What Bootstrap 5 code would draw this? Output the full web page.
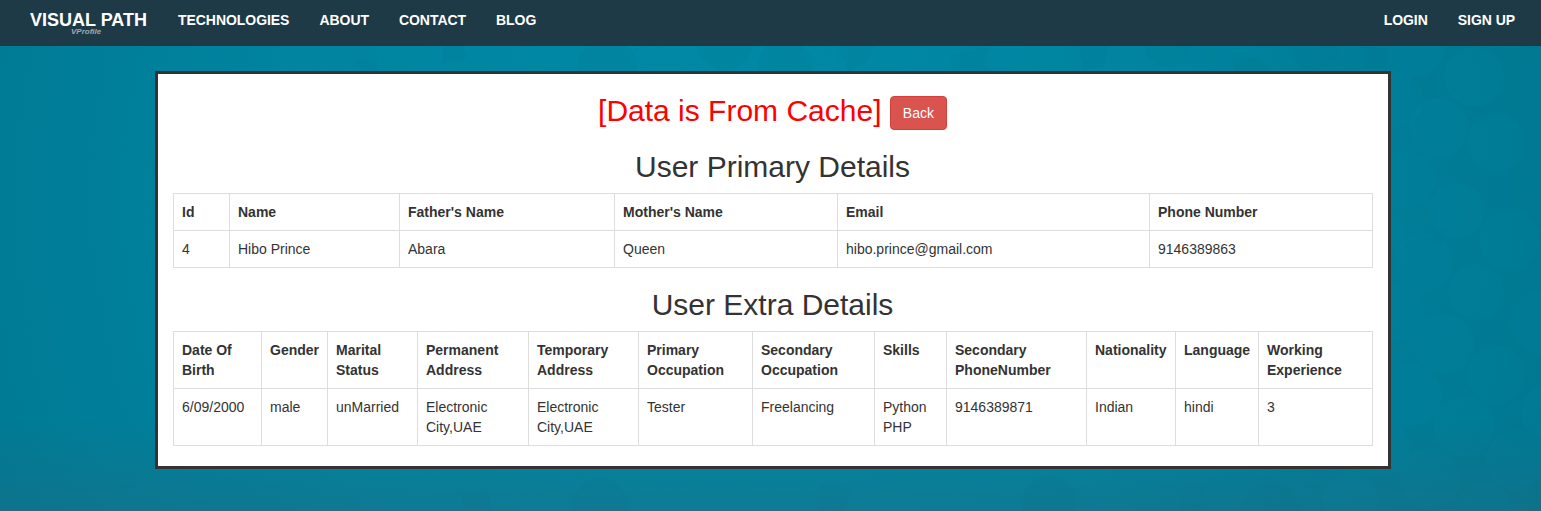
<!DOCTYPE html>
<html lang="en">
<head>
<meta charset="utf-8">
<meta name="viewport" content="width=device-width, initial-scale=1">
<title>VISUAL PATH - User Details</title>
<link href="https://cdn.jsdelivr.net/npm/bootstrap@5.3.0/dist/css/bootstrap.min.css" rel="stylesheet">
<style>
body{font-family:"Liberation Sans",Arial,sans-serif;font-size:14px;line-height:20px;color:#333;height:511px;overflow:hidden;position:relative;background:#007f9a}
.backdrop{position:absolute;inset:0;z-index:-1}
.topbar{height:46px;background:#1e3a47;padding:0 11px 0 15px}
.topbar .nav-link{color:#fff;font-weight:700;font-size:14px;line-height:20px;letter-spacing:-.05px;padding:10px 15px;text-transform:uppercase}
.brand{padding:10px 0 0 15px;width:148px;color:#fff;font-weight:700;font-size:18px;line-height:20px;text-decoration:none}
.brand-sub{font-size:8px;line-height:8px;font-style:italic;color:#a3a9ad;padding-left:41px;margin-top:-2px}
.panel-box{width:1236px;height:398px;margin:25px 0 0 155px;border:3px solid #333;background:#fff;padding:20px 15px 0}
.title{font-size:30px;line-height:33px;font-weight:400;margin:0 1px 10px 0;text-align:center}
.title-cache{height:36px;margin-bottom:20px}
.btn-back{--bs-btn-color:#fff;--bs-btn-bg:#d9534f;--bs-btn-border-color:#d43f3a;--bs-btn-hover-bg:#c9302c;--bs-btn-hover-color:#fff;--bs-btn-font-size:14px;--bs-btn-line-height:20px;--bs-btn-padding-x:12px;--bs-btn-padding-y:6px;--bs-btn-border-radius:4px}
.cache-note{color:red}
.details{table-layout:fixed;width:1200px;color:#333;border-color:#ddd;margin-bottom:20px}
.details>:not(caption)>*>*{padding:8px;background:transparent;vertical-align:top}
</style>
</head>
<body>
<svg class="backdrop" width="1541" height="511" aria-hidden="true">
  <defs>
    <radialGradient id="glow" gradientUnits="userSpaceOnUse" cx="720" cy="200" r="900">
      <stop offset="0" stop-color="#008aa7"/><stop offset=".5" stop-color="#0084a0"/><stop offset="1" stop-color="#007690"/>
    </radialGradient>
    <linearGradient id="floor" x1="0" y1="0" x2="0" y2="1">
      <stop offset="0" stop-color="#246a80" stop-opacity="0"/><stop offset="1" stop-color="#246a80" stop-opacity=".4"/>
    </linearGradient>
    <filter id="grain" x="0" y="0" width="100%" height="100%">
      <feTurbulence type="fractalNoise" baseFrequency=".35" numOctaves="3" seed="4"/>
      <feColorMatrix values="0 0 0 0 0  0 0 0 0 .25  0 0 0 0 .32  .5 0 0 0 -.2"/>
    </filter>
  </defs>
  <rect width="1541" height="511" fill="url(#glow)"/>
  <g fill="#0090ab" fill-opacity=".11">
    <circle cx="1416" cy="47" r="28"/><circle cx="1474" cy="77" r="30"/><circle cx="1394" cy="99" r="29"/>
    <circle cx="1439" cy="128" r="29"/><circle cx="1496" cy="142" r="29"/><circle cx="1406" cy="180" r="29"/>
    <circle cx="1457" cy="211" r="28"/><circle cx="1374" cy="235" r="30"/><circle cx="1509" cy="240" r="30"/>
    <circle cx="1424" cy="262" r="29"/><circle cx="1476" cy="292" r="28"/><circle cx="1394" cy="312" r="30"/>
    <circle cx="1444" cy="344" r="30"/><circle cx="1496" cy="375" r="29"/><circle cx="1541" cy="322" r="31"/>
    <circle cx="1411" cy="395" r="31"/><circle cx="1464" cy="426" r="30"/><circle cx="1550" cy="412" r="29"/>
    <circle cx="1380" cy="448" r="30"/><circle cx="1429" cy="478" r="30"/><circle cx="1516" cy="460" r="30"/>
    <circle cx="1350" cy="500" r="28"/><circle cx="1484" cy="510" r="28"/>
  </g>
  <g fill="#00738c" fill-opacity=".13">
    <path d="M443 46h20l7 16q-15-5-27 2z"/><path d="M355 60l22-1v12h-15z"/><circle cx="607" cy="68" r="30"/>
    <circle cx="725" cy="42" r="28"/><circle cx="785" cy="66" r="27"/><path d="M840 46h35l-9 17-18 8z"/>
    <path d="M950 55l40-9-7 18 10 7h-40z"/><path d="M1078 46h30l-4 20-20 5z"/><circle cx="1168" cy="44" r="23"/>
    <path d="M1230 54l32 6 8 11h-35z"/><circle cx="1315" cy="45" r="25"/>
    <path d="M1363 46l25 4-2 18h-20z"/><path d="M1408 75q16 5 30-4-5 15 1 27-14 0-24 8 3-19-7-31z"/>
    <path d="M1464 108l22-1 3 16q-11-9-25-15z"/><path d="M1422 240l24-12-4 17z"/>
    <path d="M460 492l27 0 5 19h-26z"/><circle cx="600" cy="506" r="28"/><path d="M820 484l32 4-7 22h-26z"/>
    <circle cx="1050" cy="504" r="28"/><path d="M1185 487l20-4 3 28h-28z"/><circle cx="1270" cy="510" r="28"/>
  </g>
  <rect width="1541" height="511" filter="url(#grain)" opacity=".4"/>
  <rect y="420" width="1541" height="91" fill="url(#floor)"/>
</svg>

<nav class="topbar d-flex justify-content-between align-items-start">
  <div class="d-flex">
    <a class="brand d-flex flex-column" href="#"><span class="text-nowrap">VISUAL PATH</span><span class="brand-sub">VProfile</span></a>
    <ul class="nav flex-nowrap">
      <li class="nav-item"><a class="nav-link" href="#">Technologies</a></li>
      <li class="nav-item"><a class="nav-link" href="#">About</a></li>
      <li class="nav-item"><a class="nav-link" href="#">Contact</a></li>
      <li class="nav-item"><a class="nav-link" href="#">Blog</a></li>
    </ul>
  </div>
  <ul class="nav flex-nowrap">
    <li class="nav-item"><a class="nav-link" href="#">Login</a></li>
    <li class="nav-item"><a class="nav-link" href="#">Sign up</a></li>
  </ul>
</nav>

<main class="panel-box">
  <h2 class="title title-cache"><span class="cache-note">[Data is From Cache]</span> <a class="btn btn-back" href="#">Back</a></h2>
  <h2 class="title">User Primary Details</h2>
  <table class="table table-bordered details">
    <colgroup><col width="56"><col width="170"><col width="215"><col width="223"><col width="312"><col></colgroup>
    <thead><tr><th>Id</th><th>Name</th><th>Father's Name</th><th>Mother's Name</th><th>Email</th><th>Phone Number</th></tr></thead>
    <tbody><tr><td>4</td><td>Hibo Prince</td><td>Abara</td><td>Queen</td><td>hibo.prince@gmail.com</td><td>9146389863</td></tr></tbody>
  </table>
  <h2 class="title">User Extra Details</h2>
  <table class="table table-bordered details">
    <colgroup><col width="88"><col width="66"><col width="90"><col width="111"><col width="110"><col width="114"><col width="122"><col width="72"><col width="140"><col width="89"><col width="83"><col></colgroup>
    <thead><tr><th>Date Of Birth</th><th>Gender</th><th>Marital Status</th><th>Permanent Address</th><th>Temporary Address</th><th>Primary Occupation</th><th>Secondary Occupation</th><th>Skills</th><th>Secondary PhoneNumber</th><th>Nationality</th><th>Language</th><th>Working Experience</th></tr></thead>
    <tbody><tr><td>6/09/2000</td><td>male</td><td>unMarried</td><td>Electronic City,UAE</td><td>Electronic City,UAE</td><td>Tester</td><td>Freelancing</td><td>Python PHP</td><td>9146389871</td><td>Indian</td><td>hindi</td><td>3</td></tr></tbody>
  </table>
</main>
<script src="https://cdn.jsdelivr.net/npm/bootstrap@5.3.0/dist/js/bootstrap.bundle.min.js"></script>
</body>
</html>
